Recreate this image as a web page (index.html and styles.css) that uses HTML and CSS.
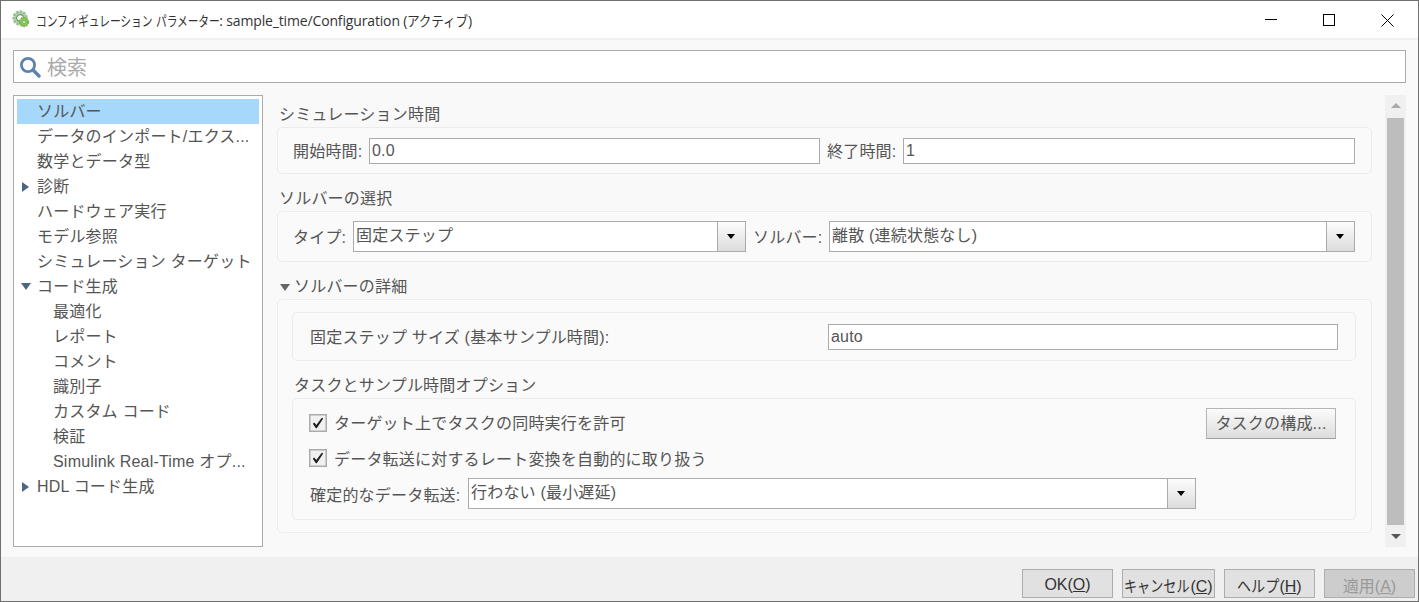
FILE: index.html
```html
<!DOCTYPE html>
<html lang="ja">
<head>
<meta charset="utf-8">
<title>コンフィギュレーション パラメーター</title>
<link rel="stylesheet" href="styles.css">
</head>
<body>
<div class="window">
  <header class="titlebar">
    <svg class="logo" viewBox="0 0 18 18" width="18" height="18">
      <circle cx="8" cy="8" r="6.200" fill="#b9d4b4" stroke="#9cc096" stroke-width="3" stroke-dasharray="2.600 .9"/>
      <circle cx="8" cy="8" r="3.400" fill="#fff" stroke="#6b9a6b" stroke-width="1.200"/>
      <circle cx="12" cy="12" r="4.300" fill="#8ac65a" stroke="#7ab84c" stroke-width="1.800" stroke-dasharray="2 .7"/>
      <circle cx="12" cy="12" r="1.500" fill="#e8f4dc" stroke="#5f9a3c" stroke-width=".6"/>
    </svg>
    <div class="title"><span class="nar n11">コンフィギュレーション</span> <span class="nar n6">パラメーター</span>: sample_time/Configuration (<span class="nar n5">アクティブ</span>)</div>
    <div class="controls">
      <svg class="ctl" viewBox="0 0 58 38" width="58" height="38"><path d="M0 18.500h12" stroke="#000" fill="none"/></svg>
      <svg class="ctl" viewBox="0 0 58 38" width="58" height="38"><rect x=".5" y="13.500" width="11" height="11" stroke="#000" fill="none"/></svg>
      <svg class="ctl" viewBox="0 0 24 38" width="24" height="38"><path d="M.5 13.500l12 12M12.500 13.500l-12 12" stroke="#000" fill="none"/></svg>
    </div>
  </header>
  <main class="body">
    <div class="search">
      <svg viewBox="0 0 22 22" width="22" height="22"><circle cx="9" cy="9" r="6.600" fill="none" stroke="#5d85ab" stroke-width="2.800"/><path d="M14 14l6 6" stroke="#5d85ab" stroke-width="3.400" stroke-linecap="round"/></svg>
      <span class="placeholder">検索</span>
    </div>
    <div class="columns">
      <nav class="tree">
        <div class="node sel">ソルバー</div>
        <div class="node">データのインポート/エクス...</div>
        <div class="node">数学とデータ型</div>
        <div class="node"><i class="tw right"></i>診断</div>
        <div class="node">ハードウェア実行</div>
        <div class="node">モデル参照</div>
        <div class="node">シミュレーション ターゲット</div>
        <div class="node"><i class="tw down"></i>コード生成</div>
        <div class="node child">最適化</div>
        <div class="node child">レポート</div>
        <div class="node child">コメント</div>
        <div class="node child">識別子</div>
        <div class="node child">カスタム コード</div>
        <div class="node child">検証</div>
        <div class="node child">Simulink Real-Time オプ...</div>
        <div class="node"><i class="tw right"></i>HDL コード生成</div>
      </nav>
      <section class="pane">
        <h2 class="head first">シミュレーション時間</h2>
        <div class="box row time">
          <label>開始時間:</label><div class="input w451">0.0</div>
          <label>終了時間:</label><div class="input grow">1</div>
        </div>
        <h2 class="head">ソルバーの選択</h2>
        <div class="box row solver">
          <label class="l53">タイプ:</label>
          <div class="combo w393"><span>固定ステップ</span><b></b></div>
          <label class="l69">ソルバー:</label>
          <div class="combo w526"><span>離散 (連続状態なし)</span><b></b></div>
        </div>
        <h2 class="head"><i class="tw down inline"></i>ソルバーの詳細</h2>
        <div class="box details">
          <div class="sub row step">
            <label>固定ステップ サイズ (基本サンプル時間):</label>
            <div class="input w510">auto</div>
          </div>
          <h3 class="head subhead">タスクとサンプル時間オプション</h3>
          <div class="sub tasks">
            <div class="row line between">
              <div class="check first"><svg viewBox="0 0 18 18" width="18" height="18"><rect x=".75" y=".75" width="16.500" height="16.500" fill="#f1f1f1" stroke="#ababab" stroke-width="1.500"/><path d="M3.800 9.800l1.500-1.300 2 2.400L12.800 3.800l1.400.7-6.400 9.700h-.9z" fill="#1e1e1e"/></svg><span>ターゲット上でタスクの同時実行を許可</span></div>
              <button class="btn cfg">タスクの構成...</button>
            </div>
            <div class="row line">
              <div class="check"><svg viewBox="0 0 18 18" width="18" height="18"><rect x=".75" y=".75" width="16.500" height="16.500" fill="#f1f1f1" stroke="#ababab" stroke-width="1.500"/><path d="M3.800 9.800l1.500-1.300 2 2.400L12.800 3.800l1.400.7-6.400 9.700h-.9z" fill="#1e1e1e"/></svg><span>データ転送に対するレート変換を自動的に取り扱う</span></div>
            </div>
            <div class="row line">
              <label class="plain">確定的なデータ転送:</label>
              <div class="combo w728"><span>行わない (最小遅延)</span><b></b></div>
            </div>
          </div>
        </div>
      </section>
      <aside class="scroll">
        <i class="sarrow up"></i>
        <div class="thumb"></div>
        <i class="sarrow dn"></i>
      </aside>
    </div>
  </main>
  <footer class="footer">
    <button class="fbtn w91">OK(<u>O</u>)</button>
    <button class="fbtn w93"><span class="nar2 c5">キャンセル</span>(<u>C</u>)</button>
    <button class="fbtn w91"><span class="nar2 c3">ヘルプ</span>(<u>H</u>)</button>
    <button class="fbtn w91 off">適用(<u>A</u>)</button>
  </footer>
</div>
</body>
</html>
```
FILE: styles.css
```css
* { box-sizing: border-box; }
html, body { margin: 0; padding: 0; }
body {
  width: 1419px; height: 602px; overflow: hidden;
  font-family: "Liberation Sans", "Noto Sans CJK JP", sans-serif;
  font-size: 16px; color: #555; letter-spacing: .2px;
}
.window {
  width: 1419px; height: 602px; display: flex; flex-direction: column;
  border: 1px solid #6f6f6f; background: #f9f9f9;
}
.titlebar {
  height: 37px; flex: none; background: #fff; display: flex; align-items: center;
  padding-left: 11px;
}
.logo { flex: none; margin-top: -1px; }
.title { margin-left: 6px; font-size: 14px; color: #333; white-space: nowrap; flex: 1; font-family: "Open Sans", "Noto Sans CJK JP", sans-serif; letter-spacing: -.15px; }
.nar { display: inline-block; transform: scaleX(.77); transform-origin: left center; }
.n11 { margin-right: -35px; }
.n6 { margin-right: -19px; }
.nar.n5 { transform: scaleX(.9); margin-right: -7px; }
.nar2 { display: inline-block; transform-origin: left center; letter-spacing: 0; }
.c5 { transform: scaleX(.82); margin-right: -14px; }
.c3 { transform: scaleX(.88); margin-right: -6px; }
.controls { display: flex; flex: none; padding-right: 13px; }
.ctl { display: block; }
.body {
  flex: 1; min-height: 0; padding: 10px 12px; border-top: 2px solid #f0f0f0;
  display: flex; flex-direction: column;
}
.search {
  height: 33px; flex: none; background: #fff; border: 1px solid #ababab;
  display: flex; align-items: center; padding-left: 5px;
}
.placeholder { font-size: 20px; color: #aaa; margin-left: 6px; letter-spacing: 0; }
.columns { flex: 1; min-height: 0; display: flex; margin-top: 12px; }
.tree { width: 250px; flex: none; background: #fff; border: 1px solid #ababab; padding: 3px; }
.node { height: 25px; line-height: 26px; padding-left: 20px; position: relative; white-space: nowrap; }
.node.sel { background: #a6d8fc; }
.node.child { padding-left: 36px; }
.tw { position: absolute; display: block; width: 0; height: 0; }
.tw.right { left: 5px; top: 8px; border-left: 7px solid #4b6583; border-top: 5px solid transparent; border-bottom: 5px solid transparent; }
.tw.down { left: 4px; top: 9px; border-top: 7px solid #4b6583; border-left: 5px solid transparent; border-right: 5px solid transparent; }
.tw.inline { position: static; display: inline-block; margin: 0 4px 1px 1px; border-top-color: #666; }
.pane { width: 1095px; flex: none; margin-left: 14px; padding-top: 7px; }
.head { font-size: 16px; font-weight: normal; margin: 12px 0 0; height: 25px; line-height: 26px; padding-left: 2px; }
.head.first { margin-top: 0; }
.box, .sub { border: 1px solid #ececec; border-radius: 5px; background: #fafafa; }
.row { display: flex; align-items: center; }
.time { height: 47px; padding: 0 16px 0 15px; gap: 7px; }
.time label { width: 69px; }
.solver { height: 51px; padding: 0 16px 0 15px; gap: 7px; }
.details { height: 234px; padding: 12px 15px 12px 14px; }
.sub.step { height: 49px; padding: 0 17px; justify-content: space-between; }
.subhead { margin-top: 12px; padding-left: 2px; }
.tasks { height: 122px; padding: 9px 19px 0 17px; }
.line { height: 31px; margin-bottom: 4px; }
.between { justify-content: space-between; }
label { white-space: nowrap; padding-bottom: 2px; }
label.plain { padding-bottom: 0; width: 149px; flex: none; }
.l53 { width: 53px; flex: none; }
.l69 { width: 69px; flex: none; }
.input { height: 26px; background: #fff; border: 1px solid #ababab; line-height: 24px; padding-left: 2px; }
.grow { flex: 1; }
.w451 { width: 451px; flex: none; }
.w510 { width: 510px; }
.combo { height: 31px; display: flex; background: #fff; border: 1px solid #ababab; flex: none; line-height: 24px; }
.combo span { flex: 1; padding-left: 2px; padding-top: 2px; }
.combo b {
  width: 28px; flex: none; border-left: 1px solid #ababab;
  background: linear-gradient(#fdfdfd, #dcdcdc); position: relative; display: block;
}
.combo b::after {
  content: ""; position: absolute; left: 9px; top: 12px; border-top: 5px solid #000;
  border-left: 4px solid transparent; border-right: 4px solid transparent;
}
.w393 { width: 393px; }
.w526 { width: 526px; }
.w728 { width: 728px; margin-left: 9px; }
.check { display: flex; align-items: center; gap: 7px; margin-left: -1px; }
.check span { padding-bottom: 2px; }
.check.first span { padding-bottom: 4px; }
.check svg { flex: none; margin-top: -1px; }
.btn {
  width: 130px; height: 31px; font: inherit; letter-spacing: .2px; color: #555; border: 1px solid #b4b4b4; border-bottom-color: #a0a0a0;
  background: linear-gradient(#fbfbfb, #dddddd); padding: 0 0 3px;
}
.scroll {
  width: 21px; flex: none; margin-left: 13px; background: #f0f0f0; display: flex; flex-direction: column; align-items: center; justify-content: space-between;
}
.thumb { width: 17px; height: 407px; background: #bdbdbd; }
.sarrow { display: block; width: 0; height: 0; border-left: 5px solid transparent; border-right: 5px solid transparent; margin: 8px 0; }
.sarrow.up { border-bottom: 5px solid #aaa; }
.sarrow.dn { border-top: 5px solid #555; }
.footer {
  height: 44px; flex: none; background: #f0f0f0; display: flex; justify-content: flex-end;
  padding: 12px 3px 3px 0; gap: 9px;
}
.fbtn { height: 29px; font: inherit; font-size: 16px; color: #333; background: #e1e1e1; border: 1px solid #adadad; padding: 2px 0 0; white-space: nowrap; }
.w91 { width: 91px; }
.w93 { width: 93px; }
.fbtn.off { background: #cdcdcd; color: #999; }
```
